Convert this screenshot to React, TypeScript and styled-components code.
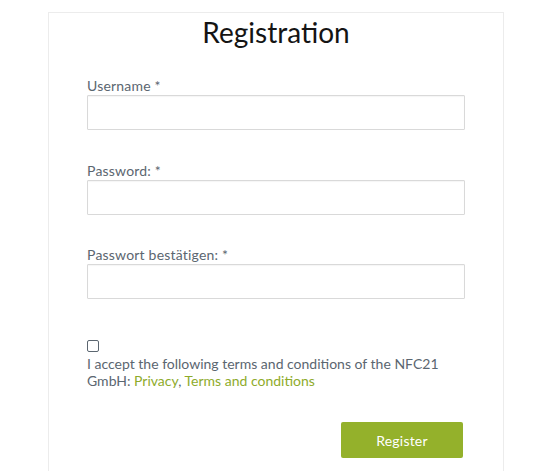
import React from 'react';
import styled, { createGlobalStyle } from 'styled-components';

const GlobalStyle = createGlobalStyle`
	body {
		margin: 0;
		background: #ffffff;
		font-family: Lato, 'Noto Sans', sans-serif;
	}
`;

const Page = styled.div`
	padding: 12px 0 0 48px;
	height: 459px;
	overflow: hidden;
`;

const Card = styled.div`
	width: 456px;
	box-sizing: border-box;
	border: 1px solid #ececec;
	border-bottom: none;
	padding: 0 38px 40px 38px;
	min-height: 480px;
`;

const Title = styled.h1`
	margin: 0;
	padding-top: 2px;
	text-align: center;
	font-size: 28px;
	font-weight: 400;
	color: #141414;
	line-height: 34px;
`;

const Form = styled.form`
	display: flex;
	flex-direction: column;
	padding-top: 28px;
`;

const Field = styled.div`
	display: flex;
	flex-direction: column;
	margin-bottom: 31.5px;
`;

const Label = styled.label`
	font-size: 14px;
	color: #5b6670;
	line-height: 18px;
	letter-spacing: 0.2px;
`;

const Input = styled.input`
	height: 35px;
	box-sizing: border-box;
	border: 1px solid #d9d9d9;
	border-radius: 1px;
	box-shadow: inset 0 1px 1px rgba(0, 0, 0, 0.04);
	padding: 0 10px;
	font-size: 14px;
	outline: none;
`;

const Consent = styled.div`
	display: flex;
	flex-direction: column;
	margin-top: 9.5px;
`;

const CheckBox = styled.span`
	width: 10px;
	height: 10px;
	border: 1.5px solid #5b6670;
	border-radius: 2px;
	margin-bottom: 3px;
`;

const ConsentText = styled.p`
	margin: 0;
	font-size: 14px;
	line-height: 17px;
	color: #5b6670;
`;

const Link = styled.a`
	color: #8eab2b;
	text-decoration: none;
`;

const Actions = styled.div`
	display: flex;
	justify-content: flex-end;
	padding-right: 2px;
	margin-top: 33px;
`;

const Button = styled.button`
	width: 122px;
	height: 36px;
	background: #94b12b;
	border: none;
	border-radius: 2px;
	color: #ffffff;
	font-family: inherit;
	font-size: 14px;
	letter-spacing: 0.2px;
`;

export default function App() {
	return (
		<>
			<GlobalStyle />
			<Page>
				<Card>
					<Title>Registration</Title>
					<Form>
						<Field>
							<Label>Username *</Label>
							<Input type="text" />
						</Field>
						<Field>
							<Label>Password: *</Label>
							<Input type="password" />
						</Field>
						<Field>
							<Label>Passwort bestätigen: *</Label>
							<Input type="password" />
						</Field>
						<Consent>
							<CheckBox />
							<ConsentText>
								I accept the following terms and conditions of the NFC21 GmbH: <Link href="#">Privacy</Link>,{' '}
								<Link href="#">Terms and conditions</Link>
							</ConsentText>
						</Consent>
						<Actions>
							<Button type="button">Register</Button>
						</Actions>
					</Form>
				</Card>
			</Page>
		</>
	);
}
